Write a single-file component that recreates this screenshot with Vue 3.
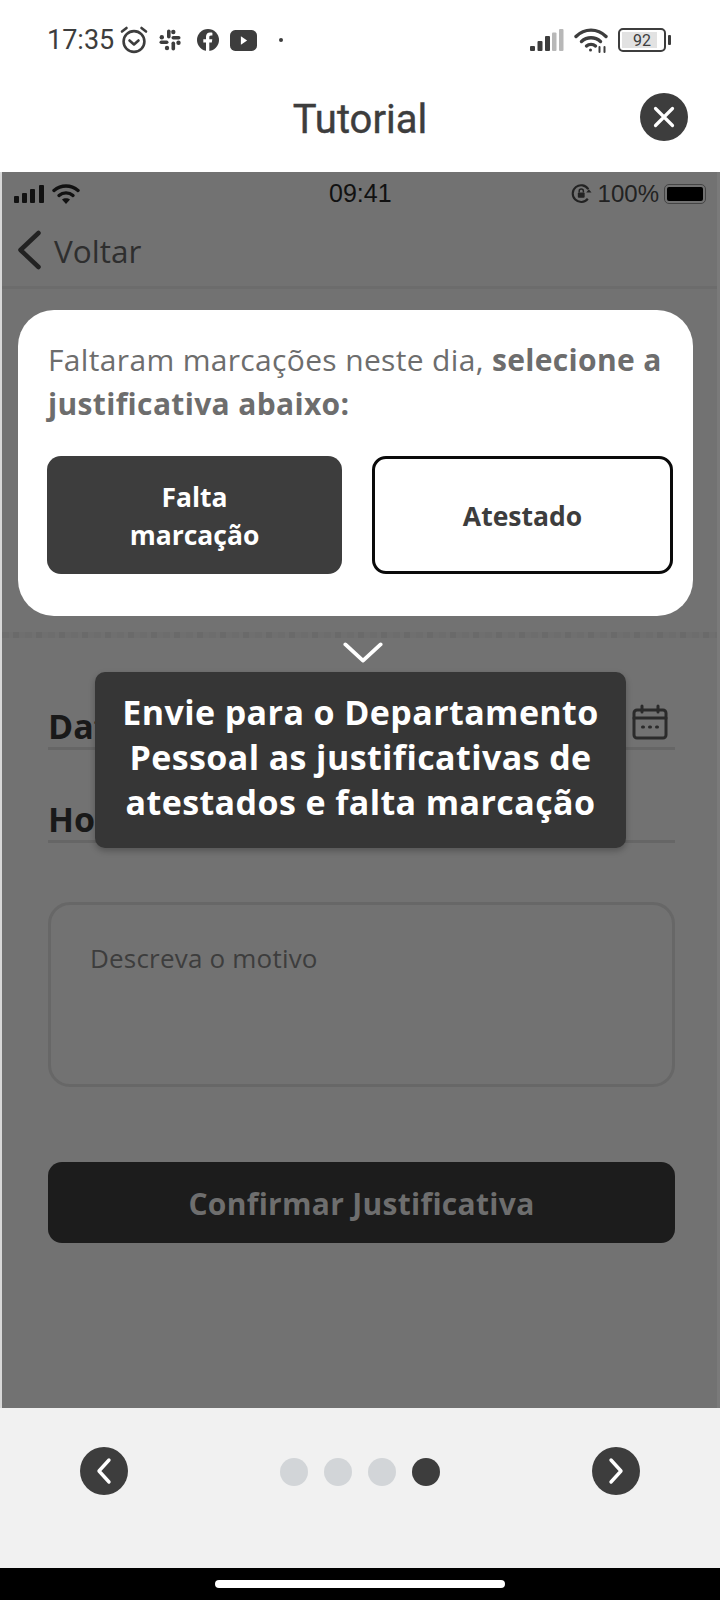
<script setup>
const dots = [false, false, false, true]
</script>

<template>
  <div class="page">
    <div class="status">
      <div class="status-left">
        <span class="time">17:35</span>
        <svg class="ic-alarm" viewBox="0 0 30 30" width="30" height="30" fill="none" stroke="#3d3d3d" stroke-width="2.6" stroke-linecap="round" stroke-linejoin="round">
          <circle cx="15" cy="16.5" r="10.4" />
          <path d="M10.5 15.5l4.5 4 4.500-4" />
          <path d="M3 6.500l4.500-3.500M27 6.500l-4.500-3.500" />
        </svg>
        <svg class="ic-slack" viewBox="0 0 24 24" width="24" height="24" fill="#3d3d3d">
          <rect x="9" y="1.500" width="3.600" height="9" rx="1.800" />
          <rect x="13.500" y="13.500" width="3.600" height="9" rx="1.800" />
          <rect x="1.500" y="12.500" width="9" height="3.600" rx="1.800" />
          <rect x="13.500" y="8" width="9" height="3.600" rx="1.800" />
          <circle cx="15.300" cy="4" r="2.200" />
          <circle cx="20.500" cy="14.800" r="2.200" />
          <circle cx="3.800" cy="9.300" r="2.200" />
          <circle cx="9" cy="20" r="2.200" />
        </svg>
        <svg class="ic-fb" viewBox="0 0 24 24" width="24" height="24">
          <circle cx="12" cy="12" r="11" fill="#3d3d3d" />
          <path d="M10 23v-8.500H7.300v-3.300H10V8.800c0-2.700 1.600-4.200 4-4.200 1.200 0 2.400.2 2.400.2v2.700H15c-1.300 0-1.700.8-1.700 1.700v2h3l-.5 3.300h-2.500V23z" fill="#fff" />
        </svg>
        <svg class="ic-yt" viewBox="0 0 26 20" width="27" height="21">
          <rect width="26" height="20" rx="5" fill="#3d3d3d" />
          <path d="M10.500 6l6 4-6 4z" fill="#fff" />
        </svg>
        <span class="dot-small"></span>
      </div>
      <div class="status-right">
        <svg viewBox="0 0 34 22" width="34" height="22">
          <rect x="0" y="17" width="5" height="5" rx="1" fill="#3d3d3d" />
          <rect x="7.500" y="12" width="5" height="10" rx="1" fill="#3d3d3d" />
          <rect x="15" y="7" width="5" height="15" rx="1" fill="#3d3d3d" />
          <rect x="22" y="3.500" width="4.500" height="18.500" rx="1" fill="#b8b8b8" />
          <rect x="29" y="0" width="4.500" height="22" rx="1" fill="#b8b8b8" />
        </svg>
        <svg class="ic-wifi" viewBox="0 0 34 26" width="34" height="26" fill="none" stroke="#3d3d3d" stroke-width="3.400" stroke-linecap="round">
          <path d="M2 9.500C10.500 1 23.500 1 32 9.500" />
          <path d="M7.500 14.500c5.500-5 13.500-5 19 0" />
          <path d="M12.500 19c2.500-2.200 6.500-2.200 9 0" />
          <circle cx="16.500" cy="23" r="1.500" fill="#3d3d3d" stroke="none" />
          <path d="M25.500 20v5M30.500 20v5" stroke-width="2" />
        </svg>
        <div class="battery">
          <div class="battery-box">
            <span class="battery-fill"></span>
            <span class="battery-num">92</span>
          </div>
          <span class="battery-tip"></span>
        </div>
      </div>
    </div>

    <header class="head">
      <h1 class="title">Tutorial</h1>
      <button class="close" aria-label="Fechar">
        <svg viewBox="0 0 24 24" width="24" height="24" fill="none" stroke="#fff" stroke-width="3.200" stroke-linecap="round">
          <path d="M3.500 3.500l17 17M20.500 3.500l-17 17" />
        </svg>
      </button>
    </header>

    <main class="shot">
      <div class="ios-status">
        <div class="ios-left">
          <svg viewBox="0 0 32 18" width="32" height="18" fill="#111">
            <rect x="0" y="11" width="5" height="7" rx="1" />
            <rect x="8" y="8" width="5" height="10" rx="1" />
            <rect x="16" y="4" width="5" height="14" rx="1" />
            <rect x="25" y="0" width="5" height="18" rx="1" />
          </svg>
          <svg viewBox="0 0 28 20" width="28" height="20" fill="none" stroke="#111" stroke-width="3.400" stroke-linecap="round">
            <path d="M2 6.500c7-6 17-6 24 0" />
            <path d="M7 11.500c4-3.500 10-3.500 14 0" />
            <path d="M14 20l-4-4.500c2-1.700 6-1.700 8 0z" fill="#111" stroke="none" />
          </svg>
        </div>
        <span class="ios-time">09:41</span>
        <div class="ios-right">
          <svg viewBox="0 0 20 20" width="21" height="21" fill="none" stroke="#222" stroke-width="2">
            <path d="M16.500 6A8 8 0 1 0 16 15" />
            <rect x="6.500" y="9" width="6.500" height="5" rx="1" fill="#222" stroke="none" />
            <path d="M7.800 9V7.800a2 2 0 0 1 4 0V9" stroke-width="1.400" />
            <path d="M14.500 9h5l-2.500-3z" fill="#222" stroke="none" />
          </svg>
          <span class="ios-pct">100%</span>
          <div class="ios-batt"><span></span></div>
        </div>
      </div>

      <div class="back">
        <svg viewBox="0 0 24 40" width="24" height="40" fill="none" stroke="#222" stroke-width="4.500" stroke-linecap="round" stroke-linejoin="round">
          <path d="M21.500 3L3.500 20l18 17" />
        </svg>
        <span>Voltar</span>
      </div>

      <section class="card">
        <p class="card-text">Faltaram marcações neste dia, <b>selecione a justificativa abaixo:</b></p>
        <div class="choices">
          <button class="choice dark">Falta<br />marcação</button>
          <button class="choice light">Atestado</button>
        </div>
      </section>
      <div class="noise"></div>

      <div class="form">
        <div class="field">
          <span class="label">Data</span>
          <svg class="cal" viewBox="0 0 36 36" width="36" height="36" fill="none" stroke="#2b2b2b" stroke-width="3" stroke-linecap="round">
            <rect x="2" y="6" width="32" height="28" rx="3" />
            <path d="M2 14h32M10 2v6M26 2v6" />
            <path d="M10.500 23h1M17.500 23h1M24.500 23h1" stroke-width="3" />
          </svg>
        </div>
        <div class="field">
          <span class="label">Hora</span>
        </div>
        <div class="area">Descreva o motivo</div>
        <button class="confirm">Confirmar Justificativa</button>
      </div>

      <div class="tip-wrap">
        <svg class="tip-arrow" viewBox="0 0 42 22" width="40" height="21" fill="none" stroke="#fff" stroke-width="4" stroke-linecap="round" stroke-linejoin="round">
          <path d="M2.500 2.500L21 19.500 39.500 2.500" />
        </svg>
        <div class="tip">Envie para o Departamento Pessoal as justificativas de atestados e falta marcação</div>
      </div>
    </main>

    <footer class="nav">
      <button class="round" aria-label="Anterior">
        <svg viewBox="0 0 16 28" width="16" height="28" fill="none" stroke="#fff" stroke-width="3.400" stroke-linecap="round" stroke-linejoin="round">
          <path d="M13 3L3 14l10 11" />
        </svg>
      </button>
      <div class="dots">
        <span v-for="(on, i) in dots" :key="i" class="dot" :class="{ on }"></span>
      </div>
      <button class="round" aria-label="Próximo">
        <svg viewBox="0 0 16 28" width="16" height="28" fill="none" stroke="#fff" stroke-width="3.400" stroke-linecap="round" stroke-linejoin="round">
          <path d="M3 3l10 11L3 25" />
        </svg>
      </button>
    </footer>

    <div class="home"><span></span></div>
  </div>
</template>

<style>
html, body { margin: 0; background: #fff; }
</style>

<style scoped>
.page {
  width: 720px;
  height: 1600px;
  display: flex;
  flex-direction: column;
  font-family: "Open Sans", sans-serif;
  background: #fff;
  overflow: hidden;
}
.status {
  height: 78px;
  box-sizing: border-box;
  padding: 22px 49px 0 47px;
  display: flex;
  justify-content: space-between;
  align-items: flex-start;
}
.status-left, .status-right { display: flex; align-items: center; height: 36px; }
.time {
  font-family: Roboto, sans-serif;
  font-size: 27px;
  color: #3d3d3d;
  margin-right: 5px;
}
.ic-slack { margin-left: 9px; }
.ic-fb { margin-left: 14px; }
.ic-yt { margin-left: 10px; }
.dot-small { width: 4px; height: 4px; border-radius: 50%; background: #3d3d3d; margin-left: 22px; }
.ic-wifi { margin-left: 10px; }
.battery { display: flex; align-items: center; margin-left: 10px; }
.battery-box {
  width: 44px;
  height: 20px;
  border: 2px solid #3d3d3d;
  border-radius: 5px;
  position: relative;
  display: flex;
  align-items: center;
  justify-content: center;
}
.battery-fill { position: absolute; left: 2px; top: 2px; bottom: 2px; width: 35px; background: #e2e2e2; }
.battery-num { position: relative; font-family: Roboto, sans-serif; font-size: 16px; color: #3d3d3d; }
.battery-tip { width: 3px; height: 10px; background: #3d3d3d; margin-left: 2px; border-radius: 1px; }

.head {
  height: 94px;
  position: relative;
  display: flex;
  align-items: center;
  justify-content: center;
}
.title {
  margin: 0 0 12px;
  font-family: Roboto, sans-serif;
  font-weight: 400;
  font-size: 40px;
  color: #3d3d3d;
  -webkit-text-stroke: 0.4px #3d3d3d;
}
.close {
  position: absolute;
  left: 640px;
  top: 15px;
  width: 48px;
  height: 48px;
  border: 0;
  padding: 0;
  border-radius: 50%;
  background: #3d3d3d;
  display: flex;
  align-items: center;
  justify-content: center;
}

.shot {
  height: 1236px;
  background: #727272;
  border-left: 2px solid #d8d8d8;
  border-right: 3px solid #7a7a7a;
  box-sizing: border-box;
  position: relative;
}
.ios-status {
  height: 42px;
  padding: 1px 11px 0 12px;
  box-sizing: border-box;
  display: flex;
  align-items: center;
  justify-content: space-between;
  position: relative;
}
.ios-left { display: flex; align-items: center; gap: 6px; }
.ios-time {
  position: absolute;
  left: 327px;
  font-family: "Liberation Sans", sans-serif;
  font-size: 25px;
  color: #111;
}
.ios-right { display: flex; align-items: center; gap: 6px; }
.ios-pct { font-family: "Liberation Sans", sans-serif; font-size: 24px; color: #222; }
.ios-batt {
  width: 42px;
  height: 20px;
  box-sizing: border-box;
  border: 1.500px solid #444;
  border-radius: 5px;
  padding: 2px;
  margin-left: -1px;
}
.ios-batt span { display: block; height: 100%; background: #000; border-radius: 2px; }
.back {
  height: 75px;
  padding-left: 15px;
  display: flex;
  align-items: center;
  gap: 13px;
  font-size: 31.500px;
  color: #2e2e2e;
  box-sizing: border-box;
  border-bottom: 3px solid #6c6c6c;
}
.card {
  margin: 21px 0 0 16px;
  width: 675px;
  height: 306px;
  box-sizing: border-box;
  padding: 28px 15px 0 30px;
  background: #fff;
  border-radius: 36px;
}
.card-text {
  margin: 0;
  font-size: 30px;
  line-height: 44px;
  letter-spacing: .34px;
  color: #6d6d6d;
}
.card-text b { font-weight: 700; }
.choices { display: flex; gap: 30px; margin: 30px 0 0 -1px; }
.choice {
  height: 118px;
  border-radius: 14px;
  box-sizing: border-box;
  font-family: "Open Sans", sans-serif;
  font-size: 26.500px;
  font-weight: 700;
  line-height: 38px;
  padding: 1px 0 0;
}
.choice.dark { width: 295px; background: #3d3d3d; color: #fff; border: 0; }
.choice.light { width: 301px; background: #fff; color: #3d3d3d; border: 3px solid #0a0a0a; }
.noise {
  height: 6px;
  margin-top: 16px;
  background: repeating-linear-gradient(90deg, #6d6d6d 0 7px, #707070 7px 11px, #6a6a6a 11px 17px, #6f6f6f 17px 23px);
}
.form { padding: 55px 42px 0 46px; display: flex; flex-direction: column; }
.field {
  height: 42px;
  padding-top: 12px;
  margin-bottom: 36px;
  border-bottom: 3px solid #666;
  display: flex;
  align-items: center;
  justify-content: space-between;
  box-sizing: content-box;
}
.label { font-size: 34px; font-weight: 700; color: #191919; }
.cal { margin-right: 7px; margin-top: -8px; }
.area {
  margin-top: 23px;
  height: 185px;
  box-sizing: border-box;
  border: 3px solid #676767;
  border-radius: 22px;
  padding: 37px 39px;
  font-size: 26px;
  letter-spacing: .2px;
  line-height: 32px;
  color: #3d3d3d;
}
.confirm {
  margin-top: 75px;
  height: 81px;
  border: 0;
  border-radius: 14px;
  background: #1c1c1c;
  color: #6e6e6e;
  font-family: "Open Sans", sans-serif;
  font-size: 30px;
  letter-spacing: .3px;
  font-weight: 700;
  padding: 2px 0 0;
}
.tip-wrap {
  position: absolute;
  left: 93px;
  top: 470px;
  width: 531px;
  display: flex;
  flex-direction: column;
  align-items: center;
}
.tip-arrow { margin-bottom: 9px; margin-left: 4px; }
.tip {
  width: 100%;
  height: 176px;
  box-sizing: border-box;
  padding: 18px 15px 0;
  background: #363636;
  border-radius: 10px;
  color: #fff;
  font-size: 34px;
  letter-spacing: .4px;
  font-weight: 700;
  line-height: 45px;
  text-align: center;
  box-shadow: 0 3px 6px rgba(0, 0, 0, .25);
}

.nav {
  height: 160px;
  background: #f1f1f1;
  padding: 39px 80px 0;
  display: flex;
  justify-content: space-between;
  align-items: flex-start;
  box-sizing: border-box;
}
.round {
  width: 48px;
  height: 48px;
  border: 0;
  padding: 0;
  border-radius: 50%;
  background: #3d3d3d;
  display: flex;
  align-items: center;
  justify-content: center;
}
.dots { display: flex; gap: 16px; margin-top: 11px; margin-left: -1px; }
.dot { width: 28px; height: 28px; border-radius: 50%; background: #d2d5d8; }
.dot.on { background: #3d3d3d; }
.home {
  height: 32px;
  background: #000;
  display: flex;
  justify-content: center;
  padding-top: 12px;
  box-sizing: border-box;
}
.home span { width: 290px; height: 8px; border-radius: 4px; background: #fff; }
</style>
